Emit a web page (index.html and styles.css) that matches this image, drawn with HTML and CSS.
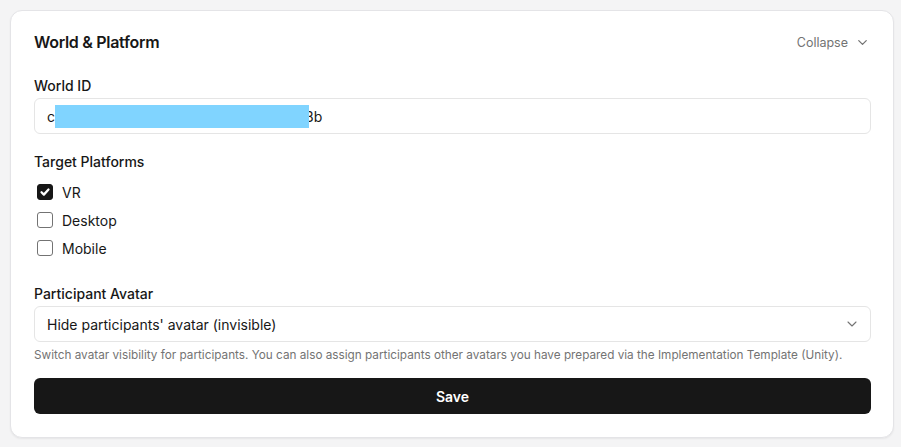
FILE: index.html
```html
<!DOCTYPE html>
<html lang="en">
<head>
<meta charset="utf-8">
<title>World &amp; Platform</title>
<link rel="stylesheet" href="styles.css">
</head>
<body>
<main class="page">
  <section class="card">
    <header class="card-header">
      <h2 class="card-title">World &amp; Platform</h2>
      <button class="collapse-btn" type="button">
        <span>Collapse</span>
        <svg class="chev" viewBox="0 0 24 24" width="16" height="16" fill="none" stroke="currentColor" stroke-width="2" stroke-linecap="round" stroke-linejoin="round"><path d="m6 9 6 6 6-6"/></svg>
      </button>
    </header>

    <div class="field">
      <label class="label">World ID</label>
      <div class="input">c<span class="redact"></span>3b</div>
    </div>

    <div class="field field-platforms">
      <label class="label">Target Platforms</label>
      <div class="checks">
        <div class="check-row">
          <span class="box checked">
            <svg viewBox="0 0 16 16" width="16" height="16" fill="none" stroke="#fff" stroke-width="2.6" stroke-linecap="round" stroke-linejoin="round"><path d="M4 8.3 6.7 11 12 5.2"/></svg>
          </span>
          <span class="check-text">VR</span>
        </div>
        <div class="check-row">
          <span class="box"></span>
          <span class="check-text">Desktop</span>
        </div>
        <div class="check-row">
          <span class="box"></span>
          <span class="check-text">Mobile</span>
        </div>
      </div>
    </div>

    <div class="field field-avatar">
      <label class="label">Participant Avatar</label>
      <div class="select">
        <span>Hide participants' avatar (invisible)</span>
        <svg class="select-chev" viewBox="0 0 24 24" width="16" height="16" fill="none" stroke="currentColor" stroke-width="1.6" stroke-linecap="round" stroke-linejoin="round"><path d="m6 9 6 6 6-6"/></svg>
      </div>
      <p class="help">Switch avatar visibility for participants. You can also assign participants other avatars you have prepared via the Implementation Template (Unity).</p>
    </div>

    <button class="save" type="button">Save</button>
  </section>
</main>
</body>
</html>
```

FILE: styles.css
```css
* { box-sizing: border-box; }

html, body {
  margin: 0;
  padding: 0;
  background: #f4f4f5;
}

body {
  font-family: Inter, "Liberation Sans", sans-serif;
  color: #171717;
}

.page {
  padding: 10px 7px 9px 10px;
}

.card {
  width: 884px;
  background: #fff;
  border: 1px solid #e4e4e7;
  border-radius: 12px;
  box-shadow: 0 1px 2px rgba(0, 0, 0, 0.06);
  padding: 20px 22px 23px 23px;
  display: flex;
  flex-direction: column;
}

.card-header {
  display: flex;
  align-items: center;
  justify-content: space-between;
  height: 22px;
  margin-bottom: 23px;
}

.card-title {
  margin: 0;
  font-size: 16px;
  font-weight: 600;
  letter-spacing: -0.3px;
  line-height: 22px;
}

.collapse-btn {
  display: flex;
  align-items: center;
  gap: 7px;
  border: 0;
  background: none;
  padding: 0 1px 0 0;
  font-family: inherit;
  font-size: 12.5px;
  color: #737373;
}

.chev { color: #737373; width: 15px; height: 15px; }

.field { display: flex; flex-direction: column; }

.label {
  font-size: 14px;
  font-weight: 500;
  line-height: 20px;
  margin-bottom: 2px;
}

.input, .select {
  height: 36px;
  border: 1px solid #e5e5e5;
  border-radius: 6px;
  padding: 0 12px;
  font-size: 14px;
  display: flex;
  align-items: center;
}

.redact {
  display: inline-block;
  width: 254px;
  height: 23px;
  background: #80d4ff;
  margin-right: -4px;
  position: relative;
}

.field-platforms { margin-top: 18px; }

.checks {
  display: flex;
  flex-direction: column;
  gap: 8px;
  margin-top: 8px;
}

.check-row {
  display: flex;
  align-items: center;
  height: 20px;
  gap: 9px;
  padding-left: 3px;
}

.box {
  width: 16px;
  height: 16px;
  border: 1px solid #737373;
  border-radius: 3px;
  display: flex;
  align-items: center;
  justify-content: center;
}

.box.checked {
  background: #171717;
  border-color: #171717;
}

.check-text { font-size: 14px; }

.field-avatar { margin-top: 26px; }

.select { justify-content: space-between; }

.select-chev { color: #737373; margin-right: -2px; }

.help {
  margin: 5px 0 0;
  font-size: 11.75px;
  line-height: 16px;
  color: #737373;
}

.save {
  margin-top: 15px;
  height: 36px;
  border: 0;
  border-radius: 6px;
  background: #171717;
  color: #fff;
  font-family: inherit;
  font-size: 14px;
  font-weight: 600;
}
```
